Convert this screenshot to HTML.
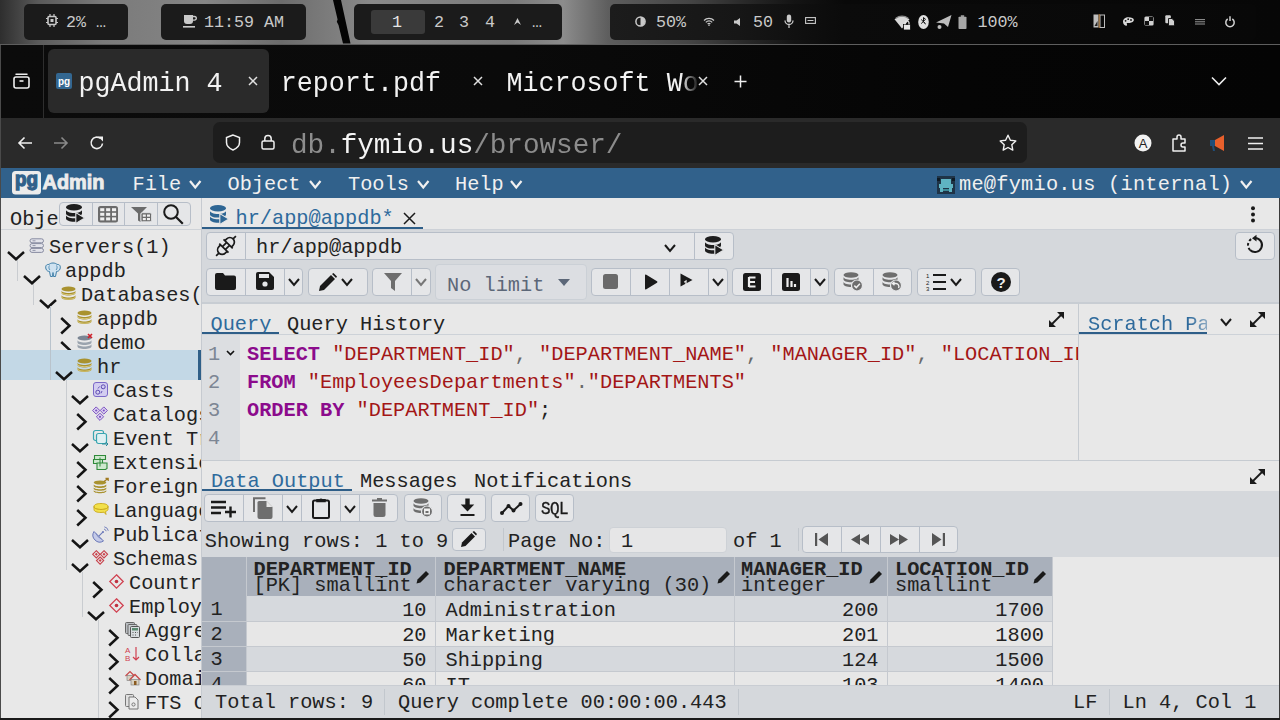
<!DOCTYPE html><html><head><meta charset="utf-8"><style>html,body{margin:0;padding:0;width:1280px;height:720px;overflow:hidden;background:#e8e8e8;position:relative}.t{position:absolute;white-space:pre;font-family:"Liberation Mono",monospace;line-height:1}svg{overflow:visible}</style></head><body><div style="position:absolute;left:0px;top:0px;width:1280px;height:44px;background:linear-gradient(90deg,#2e2e2e 0%,#5a5a5a 3%,#7a7a7a 8%,#858585 16%,#6c6c6c 22%,#8a8a8a 29%,#7a7a7a 40%,#8c8c8c 44%,#5e5e5e 47.5%,#444 54%,#2a2a2a 58%,#141414 62%,#090909 66%,#070707 100%)"></div>
<svg style="position:absolute;left:326px;top:0px;" width="30" height="44" viewBox="0 0 30 44"><path d="M7 0L15 0L24.5 43.5L17 43.5L12.5 25L10.8 21.8L11.6 19.5Z" fill="#040404"/></svg>
<div style="position:absolute;left:24px;top:4px;width:104px;height:36px;background:#1b1b1b;border-radius:5px"></div>
<div style="position:absolute;left:161px;top:4px;width:145px;height:36px;background:#1b1b1b;border-radius:5px"></div>
<div style="position:absolute;left:354px;top:4px;width:208px;height:36px;background:#1b1b1b;border-radius:5px"></div>
<div style="position:absolute;left:610px;top:4px;width:646px;height:36px;background:linear-gradient(90deg,#1c1c1c 0%,#161616 20%,#0b0b0b 36%,#080808 100%);border-radius:5px"></div>
<div style="position:absolute;left:371px;top:10px;width:54px;height:24px;background:#3a3a3a;border-radius:3px"></div>
<svg style="position:absolute;left:46px;top:14px;" width="12" height="13" viewBox="0 0 12 13"><rect x="2" y="2.5" width="8" height="8" rx="1" fill="none" stroke="#c9c9c9" stroke-width="1.6"/><rect x="4.5" y="5" width="3" height="3" fill="#c9c9c9"/><path d="M4 0v2M8 0v2M4 11v2M8 11v2M0 4.5h2M0 8.5h2M10 4.5h2M10 8.5h2" stroke="#c9c9c9" stroke-width="1.2"/></svg>
<div class="t" style="left:66px;top:14.70px;font-size:16.7px;color:#c9c9c9;letter-spacing:0px;font-weight:normal;">2% …</div>
<svg style="position:absolute;left:183px;top:14px;" width="14" height="14" viewBox="0 0 14 14"><path d="M1 1h9v6a3 3 0 0 1-3 3H4a3 3 0 0 1-3-3z" fill="#c9c9c9"/><path d="M10 2.5h1.5a1.8 1.8 0 0 1 0 3.6H10" fill="none" stroke="#c9c9c9" stroke-width="1.4"/><rect x="0" y="12" width="12" height="1.6" fill="#c9c9c9"/></svg>
<div class="t" style="left:204px;top:14.70px;font-size:16.7px;color:#c9c9c9;letter-spacing:0px;font-weight:normal;">11:59 AM</div>
<div class="t" style="left:392px;top:14.70px;font-size:16.7px;color:#e6e6e6;letter-spacing:0px;font-weight:normal;">1</div>
<div class="t" style="left:434px;top:14.70px;font-size:16.7px;color:#c9c9c9;letter-spacing:0px;font-weight:normal;">2</div>
<div class="t" style="left:459px;top:14.70px;font-size:16.7px;color:#c9c9c9;letter-spacing:0px;font-weight:normal;">3</div>
<div class="t" style="left:485px;top:14.70px;font-size:16.7px;color:#c9c9c9;letter-spacing:0px;font-weight:normal;">4</div>
<svg style="position:absolute;left:513px;top:17px;" width="9" height="9" viewBox="0 0 9 9"><path d="M1 8 L4.5 1 L8 8 L4.5 5.5Z" fill="#c9c9c9"/></svg>
<div class="t" style="left:532px;top:14.70px;font-size:16.7px;color:#c9c9c9;letter-spacing:0px;font-weight:normal;">…</div>
<svg style="position:absolute;left:635px;top:16px;" width="11" height="11" viewBox="0 0 11 11"><circle cx="5.5" cy="5.5" r="4.6" fill="none" stroke="#c9c9c9" stroke-width="1.5"/><path d="M5.5 1a4.5 4.5 0 0 1 0 9z" fill="#c9c9c9"/></svg>
<div class="t" style="left:656px;top:14.70px;font-size:16.7px;color:#c9c9c9;letter-spacing:0px;font-weight:normal;">50%</div>
<svg style="position:absolute;left:703px;top:17px;" width="12" height="9" viewBox="0 0 12 9"><path d="M1 3.5a7 7 0 0 1 10 0M2.8 5.3a4.5 4.5 0 0 1 6.4 0M4.6 7a2 2 0 0 1 2.8 0" fill="none" stroke="#c9c9c9" stroke-width="1.2"/><circle cx="6" cy="8.3" r="0.8" fill="#c9c9c9"/></svg>
<svg style="position:absolute;left:734px;top:18px;" width="8" height="8" viewBox="0 0 8 8"><path d="M0 2.5h2.5L6 0v8L2.5 5.5H0z" fill="#c9c9c9"/></svg>
<div class="t" style="left:753px;top:14.70px;font-size:16.7px;color:#c9c9c9;letter-spacing:0px;font-weight:normal;">50</div>
<svg style="position:absolute;left:784px;top:14px;" width="10" height="15" viewBox="0 0 10 15"><rect x="2.8" y="0.5" width="4.4" height="8" rx="2.2" fill="#c9c9c9"/><path d="M1 6.5a4 4 0 0 0 8 0M5 10.5v3.5" fill="none" stroke="#c9c9c9" stroke-width="1.3"/></svg>
<svg style="position:absolute;left:805px;top:17px;" width="11" height="7" viewBox="0 0 11 7"><rect x="0.6" y="0.6" width="9.8" height="5.8" fill="none" stroke="#c9c9c9" stroke-width="1.1"/><path d="M2.5 3.5h6" stroke="#c9c9c9" stroke-width="1"/></svg>
<svg style="position:absolute;left:894px;top:15px;" width="17" height="15" viewBox="0 0 17 15"><path d="M0.5 4.2 A11 11 0 0 1 15.5 4.2 L8 13.5Z" fill="#d8d8d8"/><path d="M1.8 3.2 A10 10 0 0 1 14.2 3.2" stroke="#8a8a8a" stroke-width="1.2" fill="none"/><rect x="9.5" y="9.5" width="7" height="5.5" fill="#e8e8e8" stroke="#0a0a0a" stroke-width="0.8"/><path d="M11 9.5V8a2 2 0 0 1 4 0v1.5" fill="none" stroke="#e8e8e8" stroke-width="1.2"/></svg>
<svg style="position:absolute;left:918px;top:15px;" width="11" height="14" viewBox="0 0 11 14"><ellipse cx="5.5" cy="7" rx="5.3" ry="7" fill="#e0e0e0"/><path d="M3.2 4.5l4.3 4.3-2-1.8V2.5l2 1.8-4.3 4.3" fill="none" stroke="#111" stroke-width="1"/></svg>
<svg style="position:absolute;left:936px;top:15px;" width="16" height="14" viewBox="0 0 16 14"><path d="M0 7.5 L15.5 0 L12 12 L8 8.5Z" fill="#bdbdbd"/><circle cx="3.5" cy="12" r="2" fill="#bdbdbd"/></svg>
<svg style="position:absolute;left:958px;top:15px;" width="9" height="14" viewBox="0 0 9 14"><rect x="0.5" y="1.8" width="8" height="12.2" rx="0.8" fill="#a8a8a8"/><rect x="2.8" y="0.3" width="3.4" height="1.6" fill="#a8a8a8"/></svg>
<div class="t" style="left:977.5px;top:14.70px;font-size:16.7px;color:#c9c9c9;letter-spacing:0px;font-weight:normal;">100%</div>
<svg style="position:absolute;left:1093px;top:14px;" width="12" height="14" viewBox="0 0 12 14"><rect x="0.5" y="0.5" width="5" height="13" fill="#bdbdbd"/><path d="M1.5 12 L4.5 7 L4.5 12Z" fill="#222"/><rect x="7" y="1" width="4.5" height="12.5" fill="none" stroke="#bdbdbd" stroke-width="1"/><path d="M6.2 0v14" stroke="#c88a40" stroke-width="0.9"/></svg>
<svg style="position:absolute;left:1123px;top:17px;" width="11" height="9" viewBox="0 0 11 9"><path d="M5.5 0.3C2.2 0.3 0 2.3 0 4.7s2 4 3.3 4c1 0 1-1 .4-1.6-.4-.5.2-1.2 1-1.2h2c2.3 0 4.2-1.2 4.2-2.8C10.9 1.3 8.5 0.3 5.5 0.3z" fill="#d8d8d8"/><circle cx="2.6" cy="3.8" r="0.9" fill="#111"/><circle cx="5.2" cy="2.2" r="0.9" fill="#111"/><circle cx="8" cy="3" r="0.9" fill="#111"/></svg>
<svg style="position:absolute;left:1144px;top:16px;" width="10" height="10" viewBox="0 0 10 10"><rect x="0.4" y="0.4" width="9.2" height="9.2" rx="1.5" fill="#d0d0d0"/><rect x="1" y="5" width="4" height="4" fill="#111"/><rect x="5" y="1" width="4" height="4" fill="#111"/></svg>
<svg style="position:absolute;left:1165px;top:15px;" width="10" height="11" viewBox="0 0 10 11"><rect x="0.3" y="0.3" width="5.5" height="8" rx="1" fill="#d0d0d0"/><path d="M3.5 3.5h3.5l2.5 2.5v4.8h-6z" fill="#d0d0d0" stroke="#0a0a0a" stroke-width="0.9"/></svg>
<svg style="position:absolute;left:1195px;top:19px;" width="10" height="6" viewBox="0 0 10 6"><path d="M0 0.6h10M0 2.8h10M0 5h10" stroke="#a8a8a8" stroke-width="0.9"/></svg>
<svg style="position:absolute;left:1225px;top:16px;" width="10" height="11" viewBox="0 0 10 11"><path d="M2.7 3a4.2 4.2 0 1 0 4.6 0" fill="none" stroke="#d0d0d0" stroke-width="1.5"/><path d="M5 0.3v4.6" stroke="#d0d0d0" stroke-width="1.5"/></svg>
<div style="position:absolute;left:0px;top:44px;width:1280px;height:1px;background:#5e5e5e"></div>
<div style="position:absolute;left:0px;top:45px;width:1280px;height:73px;background:linear-gradient(90deg,#0b0b0b 0%,#0a0a0a 40%,#050505 75%,#040404 100%)"></div>
<div style="position:absolute;left:0px;top:45px;width:1px;height:675px;background:#4a4a4a"></div>
<div style="position:absolute;left:43px;top:45px;width:1px;height:73px;background:#2e2e2e"></div>
<svg style="position:absolute;left:13px;top:73px;" width="17" height="16" viewBox="0 0 17 16"><path d="M3 1.2h11" stroke="#eee" stroke-width="1.5" fill="none" stroke-linecap="round"/><rect x="1" y="4" width="15" height="11" rx="2" fill="none" stroke="#eee" stroke-width="1.6"/><path d="M6.5 8h4" stroke="#eee" stroke-width="1.6"/></svg>
<div style="position:absolute;left:48px;top:49px;width:221px;height:64px;background:#2a2a2a;border-radius:6px"></div>
<svg style="position:absolute;left:56px;top:73px;" width="16" height="16" viewBox="0 0 16 16"><rect width="16" height="16" rx="2" fill="#336791"/><text x="8" y="12" font-family="Liberation Sans" font-weight="bold" font-size="10" fill="#fff" text-anchor="middle">pg</text></svg>
<div class="t" style="left:78.5px;top:70.73px;font-size:26.7px;color:#f2f2f2;letter-spacing:0px;font-weight:normal;transform:scaleY(1.02);transform-origin:0 90%">pgAdmin 4</div>
<svg style="position:absolute;left:248px;top:76px;" width="10" height="10" viewBox="0 0 10 10"><path d="M1 1L9 9M9 1L1 9" stroke="#e0e0e0" stroke-width="1.5"/></svg>
<div class="t" style="left:280.8px;top:70.73px;font-size:26.7px;color:#f2f2f2;letter-spacing:0px;font-weight:normal;transform:scaleY(1.02);transform-origin:0 90%">report.pdf</div>
<svg style="position:absolute;left:473px;top:76px;" width="10" height="10" viewBox="0 0 10 10"><path d="M1 1L9 9M9 1L1 9" stroke="#e0e0e0" stroke-width="1.5"/></svg>
<div class="t" style="left:506.5px;top:70.73px;font-size:26.7px;color:#f2f2f2;transform:scaleY(1.02);transform-origin:0 90%;width:190px;overflow:hidden;-webkit-mask-image:linear-gradient(90deg,#000 0,#000 174px,transparent 192px)">Microsoft Word</div>
<svg style="position:absolute;left:698px;top:76px;" width="10" height="10" viewBox="0 0 10 10"><path d="M1 1L9 9M9 1L1 9" stroke="#e0e0e0" stroke-width="1.5"/></svg>
<svg style="position:absolute;left:734px;top:75px;" width="13" height="13" viewBox="0 0 13 13"><path d="M6.5 0.5v12M0.5 6.5h12" stroke="#eee" stroke-width="1.5"/></svg>
<svg style="position:absolute;left:1211px;top:76px;" width="16" height="10" viewBox="0 0 16 10"><path d="M1 1.5l7 7 7-7" stroke="#eee" stroke-width="1.6" fill="none"/></svg>
<div style="position:absolute;left:1px;top:118px;width:1279px;height:50px;background:#2a2a2a"></div>
<svg style="position:absolute;left:17px;top:136px;" width="16" height="14" viewBox="0 0 16 14"><path d="M15 7H2M7.5 1.5L2 7l5.5 5.5" stroke="#f0f0f0" stroke-width="1.6" fill="none"/></svg>
<svg style="position:absolute;left:53px;top:136px;" width="16" height="14" viewBox="0 0 16 14"><path d="M1 7h13M8.5 1.5L14 7l-5.5 5.5" stroke="#8a8a8a" stroke-width="1.6" fill="none"/></svg>
<svg style="position:absolute;left:89px;top:135px;" width="16" height="16" viewBox="0 0 16 16"><path d="M13.5 8.5a5.7 5.7 0 1 1-2-5" stroke="#f0f0f0" stroke-width="1.6" fill="none"/><path d="M9 1.5h5v5z" fill="#f0f0f0"/></svg>
<div style="position:absolute;left:213px;top:122px;width:814px;height:41px;background:#1d1d1d;border-radius:7px"></div>
<svg style="position:absolute;left:225px;top:134px;" width="16" height="17" viewBox="0 0 16 17"><path d="M8 1L1.5 3.5v5C1.5 12 4.5 14.5 8 16c3.5-1.5 6.5-4 6.5-7.5v-5z" stroke="#f0f0f0" stroke-width="1.5" fill="none"/></svg>
<svg style="position:absolute;left:261px;top:134px;" width="14" height="16" viewBox="0 0 14 16"><rect x="1" y="7" width="12" height="8" rx="1.5" stroke="#f0f0f0" stroke-width="1.5" fill="none"/><path d="M3.8 7V4.8a3.2 3.2 0 0 1 6.4 0V7" stroke="#f0f0f0" stroke-width="1.5" fill="none"/></svg>
<div class="t" style="left:291px;top:132.37px;font-size:27.7px;letter-spacing:-0.05px;transform:scaleY(1.02);transform-origin:0 90%"><span style="color:#8c8c8c">db.</span><span style="color:#f4f4f4">fymio.us</span><span style="color:#8c8c8c">/browser/</span></div>
<svg style="position:absolute;left:999px;top:134px;" width="18" height="18" viewBox="0 0 18 18"><path d="M9 1.2l2.4 5 5.4.7-4 3.8 1 5.4L9 13.5l-4.8 2.6 1-5.4-4-3.8 5.4-.7z" stroke="#f0f0f0" stroke-width="1.4" fill="none" stroke-linejoin="round"/></svg>
<svg style="position:absolute;left:1134px;top:134px;" width="18" height="18" viewBox="0 0 18 18"><circle cx="9" cy="9" r="8.5" fill="#f2f2f2"/><text x="9" y="14" font-family="Liberation Sans" font-size="13" fill="#222" text-anchor="middle">A</text></svg>
<svg style="position:absolute;left:1171px;top:134px;" width="17" height="18" viewBox="0 0 17 18"><path d="M2 5h4V3a2 2 0 0 1 4 0v2h4v4h-2a2 2 0 0 0 0 4h2v4H2z" stroke="#f0f0f0" stroke-width="1.5" fill="none" stroke-linejoin="round"/></svg>
<svg style="position:absolute;left:1208px;top:134px;" width="18" height="18" viewBox="0 0 18 18"><path d="M2 6h5l9-5v16l-9-5H2z" fill="#e8602c"/><path d="M2 6h5v6H2z" fill="#1f4e79"/><path d="M4 12l1 5h2l-1-5z" fill="#1f4e79"/></svg>
<svg style="position:absolute;left:1248px;top:137px;" width="15" height="13" viewBox="0 0 15 13"><path d="M0 1h15M0 6.5h15M0 12h15" stroke="#f0f0f0" stroke-width="1.6"/></svg>
<div style="position:absolute;left:1px;top:168px;width:1279px;height:30px;background:#31618b"></div>
<svg style="position:absolute;left:11px;top:171px;" width="96" height="24" viewBox="0 0 96 24"><rect x="1" y="0" width="29" height="23.5" rx="3.5" fill="#ececec"/><text x="4" y="15.2" font-family="Liberation Sans" font-weight="bold" font-size="20" fill="#31618b" stroke="#31618b" stroke-width="1.3" textLength="23" lengthAdjust="spacingAndGlyphs">pg</text><text x="31.5" y="18.4" font-family="Liberation Sans" font-weight="bold" font-size="20.4" fill="#ececec" stroke="#ececec" stroke-width="0.9" textLength="62" lengthAdjust="spacingAndGlyphs">Admin</text></svg>
<div class="t" style="left:132.5px;top:174.54px;font-size:20.3px;color:#f0f0f0;letter-spacing:0px;font-weight:normal;">File</div>
<svg style="position:absolute;left:188.5px;top:180px;" width="12.5" height="8.5" viewBox="0 0 12.5 8.5"><path d="M1 1L6.25 7.5L11.5 1" stroke="#f0f0f0" stroke-width="2.2" fill="none"/></svg>
<div class="t" style="left:227.5px;top:174.54px;font-size:20.3px;color:#f0f0f0;letter-spacing:0px;font-weight:normal;">Object</div>
<svg style="position:absolute;left:308.5px;top:180px;" width="12.5" height="8.5" viewBox="0 0 12.5 8.5"><path d="M1 1L6.25 7.5L11.5 1" stroke="#f0f0f0" stroke-width="2.2" fill="none"/></svg>
<div class="t" style="left:348px;top:174.54px;font-size:20.3px;color:#f0f0f0;letter-spacing:0px;font-weight:normal;">Tools</div>
<svg style="position:absolute;left:416.5px;top:180px;" width="12.5" height="8.5" viewBox="0 0 12.5 8.5"><path d="M1 1L6.25 7.5L11.5 1" stroke="#f0f0f0" stroke-width="2.2" fill="none"/></svg>
<div class="t" style="left:455px;top:174.54px;font-size:20.3px;color:#f0f0f0;letter-spacing:0px;font-weight:normal;">Help</div>
<svg style="position:absolute;left:510px;top:180px;" width="12.5" height="8.5" viewBox="0 0 12.5 8.5"><path d="M1 1L6.25 7.5L11.5 1" stroke="#f0f0f0" stroke-width="2.2" fill="none"/></svg>
<svg style="position:absolute;left:937px;top:176px;" width="18" height="18" viewBox="0 0 18 18"><rect x="0" y="0" width="18" height="18" fill="#1f3447"/><rect x="0" y="2" width="3" height="3" fill="#0e1a24"/><rect x="15" y="2" width="3" height="3" fill="#0e1a24"/><rect x="4" y="3" width="10" height="6" fill="#5fb3c2"/><rect x="2" y="8" width="14" height="4" fill="#5fb3c2"/><rect x="3" y="12" width="3" height="4" fill="#5fb3c2"/><rect x="12" y="12" width="3" height="4" fill="#5fb3c2"/><rect x="6" y="13" width="6" height="2" fill="#3d8a98"/></svg>
<div class="t" style="left:959px;top:174.54px;font-size:20.3px;color:#f0f0f0;letter-spacing:0.25px;font-weight:normal;">me@fymio.us (internal)</div>
<svg style="position:absolute;left:1240px;top:180px;" width="12.5" height="8.5" viewBox="0 0 12.5 8.5"><path d="M1 1L6.25 7.5L11.5 1" stroke="#f0f0f0" stroke-width="2.2" fill="none"/></svg>
<div style="position:absolute;left:1px;top:198px;width:201px;height:520px;background:#e8e8e8"></div>
<div class="t" style="left:10px;top:209.94px;font-size:20.3px;color:#222222;letter-spacing:0px;font-weight:normal;">Obje</div>
<div style="position:absolute;left:58.5px;top:202px;width:132px;height:24px;background:#e5e6e8;border:1px solid #b7bec8;border-radius:4px;box-sizing:border-box"></div>
<div style="position:absolute;left:91.5px;top:203px;width:1px;height:22px;background:#b7bec8"></div>
<div style="position:absolute;left:124.2px;top:203px;width:1px;height:22px;background:#b7bec8"></div>
<div style="position:absolute;left:157px;top:203px;width:1px;height:22px;background:#b7bec8"></div>
<svg style="position:absolute;left:66px;top:204px;" width="19" height="20" viewBox="0 0 19 20"><ellipse cx="8" cy="3.2" rx="8" ry="3.2" fill="#1e1e1e"/><path d="M0 5.8v3.6c0 1.8 3.6 3.2 8 3.2s8-1.4 8-3.2V5.8c0 1.8-3.6 3.2-8 3.2S0 7.6 0 5.8zM0 11v3.6c0 1.8 3.6 3.2 8 3.2s8-1.4 8-3.2V11c0 1.8-3.6 3.2-8 3.2S0 12.8 0 11z" fill="#1e1e1e"/><path d="M9.8 8.6L18.8 14L9.8 19.4Z" fill="#1e1e1e" stroke="#e5e6e8" stroke-width="1.1"/></svg>
<svg style="position:absolute;left:98px;top:206px;" width="20" height="16.5" viewBox="0 0 20 16.5"><rect x="0" y="0" width="20" height="16.5" rx="2.5" fill="#6b6b6b"/><rect x="2.2" y="2.2" width="4.1" height="3" fill="#f0f0f0"/><rect x="8.1" y="2.2" width="4.1" height="3" fill="#f0f0f0"/><rect x="14.0" y="2.2" width="4.1" height="3" fill="#f0f0f0"/><rect x="2.2" y="6.8" width="4.1" height="3" fill="#f0f0f0"/><rect x="8.1" y="6.8" width="4.1" height="3" fill="#f0f0f0"/><rect x="14.0" y="6.8" width="4.1" height="3" fill="#f0f0f0"/><rect x="2.2" y="11.4" width="4.1" height="3" fill="#f0f0f0"/><rect x="8.1" y="11.4" width="4.1" height="3" fill="#f0f0f0"/><rect x="14.0" y="11.4" width="4.1" height="3" fill="#f0f0f0"/></svg>
<svg style="position:absolute;left:131px;top:206.5px;" width="21" height="15" viewBox="0 0 21 15"><path d="M0 0h16l-6.5 6.5v8.5l-2.5-1.5V6.5z" fill="#6b6b6b"/><rect x="10" y="5.7" width="10.5" height="9" rx="1.5" fill="#6b6b6b" stroke="#e5e6e8" stroke-width="0.8"/><rect x="11.8" y="7.5" width="3" height="2.2" fill="#f0f0f0"/><rect x="16" y="7.5" width="3" height="2.2" fill="#f0f0f0"/><rect x="11.8" y="11" width="3" height="2.2" fill="#f0f0f0"/><rect x="16" y="11" width="3" height="2.2" fill="#f0f0f0"/></svg>
<svg style="position:absolute;left:163px;top:204px;" width="21" height="20" viewBox="0 0 21 20"><circle cx="8" cy="8" r="6.8" stroke="#1a1a1a" stroke-width="2" fill="none"/><path d="M12.8 12.8l7 7" stroke="#1a1a1a" stroke-width="2.2"/></svg>
<div style="position:absolute;left:1px;top:229px;width:201px;height:1px;background:#cfd3d8"></div>
<div style="position:absolute;left:17px;top:258px;width:1px;height:23px;background:#c9ccd0"></div>
<div style="position:absolute;left:33px;top:282px;width:1px;height:23px;background:#c9ccd0"></div>
<div style="position:absolute;left:65.5px;top:380px;width:1px;height:190px;background:#c9ccd0"></div>
<div style="position:absolute;left:81.5px;top:572px;width:1px;height:45px;background:#c9ccd0"></div>
<div style="position:absolute;left:97.5px;top:620px;width:1px;height:98px;background:#c9ccd0"></div>
<div class="t" style="left:49px;top:237.74px;font-size:20.3px;color:#222222;letter-spacing:0px;font-weight:normal;">Servers(1)</div>
<svg style="position:absolute;left:6.799999999999997px;top:250.79999999999998px;" width="18" height="9" viewBox="0 0 18 9"><path d="M1 1L9 8.2L17 1" stroke="#141414" stroke-width="2.5" fill="none"/></svg>
<svg style="position:absolute;left:29px;top:238.1px;" width="16" height="16" viewBox="0 0 16 16"><rect x="1" y="0.8" width="13.5" height="4" rx="2" fill="#e2e3ea" stroke="#7d8199" stroke-width="0.9"/><rect x="1" y="5.6" width="13.5" height="4" rx="2" fill="#e2e3ea" stroke="#7d8199" stroke-width="0.9"/><rect x="1" y="10.4" width="13.5" height="4" rx="2" fill="#e2e3ea" stroke="#7d8199" stroke-width="0.9"/><path d="M3.5 2.8h3M3.5 7.6h3M3.5 12.4h3" stroke="#7d8199" stroke-width="0.8"/></svg>
<div class="t" style="left:65px;top:261.74px;font-size:20.3px;color:#222222;letter-spacing:0px;font-weight:normal;">appdb</div>
<svg style="position:absolute;left:22.799999999999997px;top:274.8px;" width="18" height="9" viewBox="0 0 18 9"><path d="M1 1L9 8.2L17 1" stroke="#141414" stroke-width="2.5" fill="none"/></svg>
<svg style="position:absolute;left:45px;top:262.1px;" width="16" height="16" viewBox="0 0 16 16"><path d="M4 2.5C5.5 0.5 10.5 0.5 12 2.5C14.5 2 16 4 15 7C14.3 9 12.5 9.5 11.5 9.5L10.5 14.5H8.5L8 10.5L7.5 14.5H5.5L4.5 9.5C3.5 9.5 1.7 9 1 7C0 4 1.5 2 4 2.5z" fill="#cfe2f0" stroke="#3f7fa8" stroke-width="1"/><path d="M4.5 3.5C3.5 5 3.8 7 5 8M11.5 3.5C12.5 5 12.2 7 11 8" stroke="#3f7fa8" stroke-width="0.8" fill="none"/></svg>
<div class="t" style="left:81px;top:285.74px;font-size:20.3px;color:#222222;letter-spacing:0px;font-weight:normal;">Databases(</div>
<svg style="position:absolute;left:38.8px;top:298.8px;" width="18" height="9" viewBox="0 0 18 9"><path d="M1 1L9 8.2L17 1" stroke="#141414" stroke-width="2.5" fill="none"/></svg>
<svg style="position:absolute;left:61px;top:286.1px;" width="16" height="16" viewBox="0 0 16 16"><ellipse cx="7.5" cy="3" rx="7" ry="2.5" fill="#a9922f"/><path d="M0.5 4.5v2.5c0 1.4 3.1 2.5 7 2.5s7-1.1 7-2.5V4.5c0 1.4-3.1 2.5-7 2.5s-7-1.1-7-2.5zM0.5 9v2.5c0 1.4 3.1 2.5 7 2.5s7-1.1 7-2.5V9c0 1.4-3.1 2.5-7 2.5s-7-1.1-7-2.5z" fill="#a9922f"/><path d="M0.5 6.2c0 1.4 3.1 2.5 7 2.5s7-1.1 7-2.5M0.5 10.7c0 1.4 3.1 2.5 7 2.5s7-1.1 7-2.5" stroke="#e8dc9a" stroke-width="0.8" fill="none"/></svg>
<div class="t" style="left:97px;top:309.74px;font-size:20.3px;color:#222222;letter-spacing:0px;font-weight:normal;">appdb</div>
<svg style="position:absolute;left:59.5px;top:317.3px;" width="11" height="17.5" viewBox="0 0 11 17.5"><path d="M1.2 1L9.5 8.75L1.2 16.5" stroke="#141414" stroke-width="2.5" fill="none"/></svg>
<svg style="position:absolute;left:77px;top:310.1px;" width="16" height="16" viewBox="0 0 16 16"><ellipse cx="7.5" cy="3" rx="7" ry="2.5" fill="#a9922f"/><path d="M0.5 4.5v2.5c0 1.4 3.1 2.5 7 2.5s7-1.1 7-2.5V4.5c0 1.4-3.1 2.5-7 2.5s-7-1.1-7-2.5zM0.5 9v2.5c0 1.4 3.1 2.5 7 2.5s7-1.1 7-2.5V9c0 1.4-3.1 2.5-7 2.5s-7-1.1-7-2.5z" fill="#a9922f"/><path d="M0.5 6.2c0 1.4 3.1 2.5 7 2.5s7-1.1 7-2.5M0.5 10.7c0 1.4 3.1 2.5 7 2.5s7-1.1 7-2.5" stroke="#e8dc9a" stroke-width="0.8" fill="none"/></svg>
<div class="t" style="left:97px;top:333.74px;font-size:20.3px;color:#222222;letter-spacing:0px;font-weight:normal;">demo</div>
<svg style="position:absolute;left:59.5px;top:341.3px;" width="11" height="17.5" viewBox="0 0 11 17.5"><path d="M1.2 1L9.5 8.75L1.2 16.5" stroke="#141414" stroke-width="2.5" fill="none"/></svg>
<svg style="position:absolute;left:77px;top:334.1px;" width="16" height="16" viewBox="0 0 16 16"><ellipse cx="7.5" cy="4" rx="7" ry="2.5" fill="#7b8694"/><path d="M0.5 6v2.5c0 1.4 3.1 2.5 7 2.5s7-1.1 7-2.5V6c0 1.4-3.1 2.5-7 2.5s-7-1.1-7-2.5zM0.5 10v2.5c0 1.4 3.1 2.5 7 2.5s7-1.1 7-2.5V10c0 1.4-3.1 2.5-7 2.5s-7-1.1-7-2.5z" fill="#9aa3ad"/><path d="M11 0l4 4M15 0l-4 4" stroke="#d0202a" stroke-width="1.6"/></svg>
<div style="position:absolute;left:1px;top:350px;width:197px;height:30px;background:#c3d8e6"></div>
<div style="position:absolute;left:198px;top:350px;width:3px;height:30px;background:#2f5f88"></div>
<div style="position:absolute;left:49.5px;top:306px;width:1px;height:74px;background:#b9c3cc"></div>
<div class="t" style="left:97px;top:357.74px;font-size:20.3px;color:#222222;letter-spacing:0px;font-weight:normal;">hr</div>
<svg style="position:absolute;left:54.8px;top:370.8px;" width="18" height="9" viewBox="0 0 18 9"><path d="M1 1L9 8.2L17 1" stroke="#141414" stroke-width="2.5" fill="none"/></svg>
<svg style="position:absolute;left:77px;top:358.1px;" width="16" height="16" viewBox="0 0 16 16"><ellipse cx="7.5" cy="3" rx="7" ry="2.5" fill="#a9922f"/><path d="M0.5 4.5v2.5c0 1.4 3.1 2.5 7 2.5s7-1.1 7-2.5V4.5c0 1.4-3.1 2.5-7 2.5s-7-1.1-7-2.5zM0.5 9v2.5c0 1.4 3.1 2.5 7 2.5s7-1.1 7-2.5V9c0 1.4-3.1 2.5-7 2.5s-7-1.1-7-2.5z" fill="#a9922f"/><path d="M0.5 6.2c0 1.4 3.1 2.5 7 2.5s7-1.1 7-2.5M0.5 10.7c0 1.4 3.1 2.5 7 2.5s7-1.1 7-2.5" stroke="#e8dc9a" stroke-width="0.8" fill="none"/></svg>
<div class="t" style="left:113px;top:381.74px;font-size:20.3px;color:#222222;letter-spacing:0px;font-weight:normal;">Casts</div>
<svg style="position:absolute;left:70.8px;top:394.8px;" width="18" height="9" viewBox="0 0 18 9"><path d="M1 1L9 8.2L17 1" stroke="#141414" stroke-width="2.5" fill="none"/></svg>
<svg style="position:absolute;left:93px;top:382.1px;" width="16" height="16" viewBox="0 0 16 16"><rect x="0.5" y="0.5" width="14" height="14" rx="2.5" fill="#d3cdf0" stroke="#7b68c8" stroke-width="1"/><circle cx="4.8" cy="10.2" r="2" fill="none" stroke="#5a48b0" stroke-width="1"/><circle cx="10.2" cy="4.8" r="2" fill="none" stroke="#5a48b0" stroke-width="1"/><path d="M5 6.5l1.5-2M9 9l-1 2.3" stroke="#5a48b0" stroke-width="0.9"/></svg>
<div class="t" style="left:113px;top:405.74px;font-size:20.3px;color:#222222;letter-spacing:0px;font-weight:normal;">Catalogs</div>
<svg style="position:absolute;left:75.5px;top:413.3px;" width="11" height="17.5" viewBox="0 0 11 17.5"><path d="M1.2 1L9.5 8.75L1.2 16.5" stroke="#141414" stroke-width="2.5" fill="none"/></svg>
<svg style="position:absolute;left:93px;top:406.1px;" width="16" height="16" viewBox="0 0 16 16"><path d="M3.2 0.8999999999999999L6.800000000000001 4.5L3.2 8.1L-0.3999999999999999 4.5Z" fill="#ddd3f2" stroke="#7a4fc0" stroke-width="1"/><circle cx="3.2" cy="4.5" r="1.1" fill="#7a4fc0"/><path d="M10.8 0.8999999999999999L14.4 4.5L10.8 8.1L7.200000000000001 4.5Z" fill="#ddd3f2" stroke="#7a4fc0" stroke-width="1"/><circle cx="10.8" cy="4.5" r="1.1" fill="#7a4fc0"/><path d="M7 7.200000000000001L10.6 10.8L7 14.4L3.4 10.8Z" fill="#ddd3f2" stroke="#7a4fc0" stroke-width="1"/><circle cx="7" cy="10.8" r="1.1" fill="#7a4fc0"/></svg>
<div class="t" style="left:113px;top:429.74px;font-size:20.3px;color:#222222;letter-spacing:0px;font-weight:normal;">Event Tr</div>
<svg style="position:absolute;left:70.8px;top:442.8px;" width="18" height="9" viewBox="0 0 18 9"><path d="M1 1L9 8.2L17 1" stroke="#141414" stroke-width="2.5" fill="none"/></svg>
<svg style="position:absolute;left:93px;top:430.1px;" width="16" height="16" viewBox="0 0 16 16"><rect x="0.5" y="0.5" width="10" height="10" rx="2" fill="none" stroke="#3aa5b0" stroke-width="1.2"/><rect x="3.5" y="3.5" width="10" height="10" rx="2" fill="#dff0f2" stroke="#3aa5b0" stroke-width="1.2"/><path d="M9 14h6M13 12l2 2-2 2" stroke="#2a8a9a" stroke-width="1" fill="none"/></svg>
<div class="t" style="left:113px;top:453.74px;font-size:20.3px;color:#222222;letter-spacing:0px;font-weight:normal;">Extensio</div>
<svg style="position:absolute;left:75.5px;top:461.3px;" width="11" height="17.5" viewBox="0 0 11 17.5"><path d="M1.2 1L9.5 8.75L1.2 16.5" stroke="#141414" stroke-width="2.5" fill="none"/></svg>
<svg style="position:absolute;left:93px;top:454.1px;" width="16" height="16" viewBox="0 0 16 16"><path d="M1.5 1.5h11v4h-11z" fill="#cfe8cf" stroke="#2f8a3a" stroke-width="1.1"/><path d="M0.5 5.5h9v4h-9z" fill="#cfe8cf" stroke="#2f8a3a" stroke-width="1.1"/><path d="M4 9h10v5.5l-1.5 1h-8.5z" fill="#cfe8cf" stroke="#2f8a3a" stroke-width="1.1"/><path d="M7 3.5v9" stroke="#2f8a3a" stroke-width="1"/></svg>
<div class="t" style="left:113px;top:477.74px;font-size:20.3px;color:#222222;letter-spacing:0px;font-weight:normal;">Foreign </div>
<svg style="position:absolute;left:75.5px;top:485.3px;" width="11" height="17.5" viewBox="0 0 11 17.5"><path d="M1.2 1L9.5 8.75L1.2 16.5" stroke="#141414" stroke-width="2.5" fill="none"/></svg>
<svg style="position:absolute;left:93px;top:478.1px;" width="16" height="16" viewBox="0 0 16 16"><ellipse cx="7" cy="4.5" rx="6.3" ry="2" fill="#a99230"/><path d="M0.7 6.3c0 1.1 2.8 2 6.3 2s6.3-.9 6.3-2v1.6c0 1.1-2.8 2-6.3 2S0.7 9 0.7 7.9zM0.7 9.2c0 1.1 2.8 2 6.3 2s6.3-.9 6.3-2v1.6c0 1.1-2.8 2-6.3 2S0.7 11.9 0.7 10.8zM0.7 12.1c0 1.1 2.8 2 6.3 2s6.3-.9 6.3-2v1.2c0 1.1-2.8 2-6.3 2S0.7 14.4 0.7 13.3z" fill="#a99230"/><path d="M11 3.5l4-3M12.5 0.3h2.7v2.7" stroke="#a07a20" stroke-width="1.2" fill="none"/></svg>
<div class="t" style="left:113px;top:501.74px;font-size:20.3px;color:#222222;letter-spacing:0px;font-weight:normal;">Language</div>
<svg style="position:absolute;left:75.5px;top:509.3px;" width="11" height="17.5" viewBox="0 0 11 17.5"><path d="M1.2 1L9.5 8.75L1.2 16.5" stroke="#141414" stroke-width="2.5" fill="none"/></svg>
<svg style="position:absolute;left:93px;top:502.1px;" width="16" height="16" viewBox="0 0 16 16"><path d="M1 4.5C1 2.5 4 1.5 8 1.5s7 1 7 3-3 3-7 3-7-1-7-3z" fill="#f2e04a" stroke="#c9a81a" stroke-width="0.9"/><path d="M1 4.5v3c0 2 3 3 7 3 1 0 2-.1 3-.3l2 2.3-.5-3c1.6-.5 2.5-1.2 2.5-2v-3c0 2-3 3-7 3s-7-1-7-3z" fill="#f2e04a" stroke="#c9a81a" stroke-width="0.9"/></svg>
<div class="t" style="left:113px;top:525.74px;font-size:20.3px;color:#222222;letter-spacing:0px;font-weight:normal;">Publicat</div>
<svg style="position:absolute;left:70.8px;top:538.8000000000001px;" width="18" height="9" viewBox="0 0 18 9"><path d="M1 1L9 8.2L17 1" stroke="#141414" stroke-width="2.5" fill="none"/></svg>
<svg style="position:absolute;left:93px;top:526.1px;" width="16" height="16" viewBox="0 0 16 16"><path d="M1 5.5A6.9 6.9 0 0 0 10.5 15Z" fill="#c5cbe8" stroke="#6a78b8" stroke-width="1"/><path d="M2.8 7.3Q4.5 11.5 8.7 13.2" stroke="#6a78b8" stroke-width="0.7" fill="none"/><path d="M5.8 10.2l4-4" stroke="#6a78b8" stroke-width="1.1"/><circle cx="10" cy="6" r="1" fill="#6a78b8"/><path d="M11 3a3 3 0 0 1 2.2 2.2M11.3 0.8a5 5 0 0 1 4 4" stroke="#6a78b8" stroke-width="0.9" fill="none"/></svg>
<div class="t" style="left:113px;top:549.74px;font-size:20.3px;color:#222222;letter-spacing:0px;font-weight:normal;">Schemas </div>
<svg style="position:absolute;left:70.8px;top:562.8000000000001px;" width="18" height="9" viewBox="0 0 18 9"><path d="M1 1L9 8.2L17 1" stroke="#141414" stroke-width="2.5" fill="none"/></svg>
<svg style="position:absolute;left:93px;top:550.1px;" width="16" height="16" viewBox="0 0 16 16"><path d="M3.3 0.6999999999999997L6.9 4.3L3.3 7.9L-0.30000000000000027 4.3Z" fill="none" stroke="#c8404a" stroke-width="1.1"/><path d="M3.3 2.8L4.8 4.3L3.3 5.8L1.7999999999999998 4.3Z" fill="#c8404a"/><path d="M11 0.6999999999999997L14.6 4.3L11 7.9L7.4 4.3Z" fill="none" stroke="#c8404a" stroke-width="1.1"/><path d="M11 2.8L12.5 4.3L11 5.8L9.5 4.3Z" fill="#c8404a"/><path d="M7.1 7.0L10.7 10.6L7.1 14.2L3.4999999999999996 10.6Z" fill="none" stroke="#c8404a" stroke-width="1.1"/><path d="M7.1 9.1L8.6 10.6L7.1 12.1L5.6 10.6Z" fill="#c8404a"/></svg>
<div class="t" style="left:129px;top:573.74px;font-size:20.3px;color:#222222;letter-spacing:0px;font-weight:normal;">Countr</div>
<svg style="position:absolute;left:91.5px;top:581.3000000000001px;" width="11" height="17.5" viewBox="0 0 11 17.5"><path d="M1.2 1L9.5 8.75L1.2 16.5" stroke="#141414" stroke-width="2.5" fill="none"/></svg>
<svg style="position:absolute;left:109px;top:574.1px;" width="16" height="16" viewBox="0 0 16 16"><path d="M7.5 0.8l6.7 6.7-6.7 6.7-6.7-6.7z" fill="none" stroke="#d04050" stroke-width="1.3"/><circle cx="7.5" cy="7.5" r="1.8" fill="#c03040"/></svg>
<div class="t" style="left:129px;top:597.74px;font-size:20.3px;color:#222222;letter-spacing:0px;font-weight:normal;">Employ</div>
<svg style="position:absolute;left:86.8px;top:610.8000000000001px;" width="18" height="9" viewBox="0 0 18 9"><path d="M1 1L9 8.2L17 1" stroke="#141414" stroke-width="2.5" fill="none"/></svg>
<svg style="position:absolute;left:109px;top:598.1px;" width="16" height="16" viewBox="0 0 16 16"><path d="M7.5 0.8l6.7 6.7-6.7 6.7-6.7-6.7z" fill="none" stroke="#d04050" stroke-width="1.3"/><circle cx="7.5" cy="7.5" r="1.8" fill="#c03040"/></svg>
<div class="t" style="left:145px;top:621.74px;font-size:20.3px;color:#222222;letter-spacing:0px;font-weight:normal;">Aggre</div>
<svg style="position:absolute;left:107.5px;top:629.3000000000001px;" width="11" height="17.5" viewBox="0 0 11 17.5"><path d="M1.2 1L9.5 8.75L1.2 16.5" stroke="#141414" stroke-width="2.5" fill="none"/></svg>
<svg style="position:absolute;left:125px;top:622.1px;" width="16" height="16" viewBox="0 0 16 16"><rect x="0.5" y="0.5" width="9" height="11" rx="1" fill="#b8bcc0" stroke="#666" stroke-width="1"/><rect x="3" y="2.5" width="9" height="11" rx="1" fill="#c8ccd0" stroke="#666" stroke-width="1"/><rect x="5.5" y="4.5" width="9" height="11" rx="1" fill="#d8dcdf" stroke="#555" stroke-width="1"/><rect x="7" y="6" width="6" height="2.5" fill="#5a8a70"/><path d="M7.5 10.5h1M10 10.5h1M12.5 10.5h.5M7.5 13h1M10 13h1" stroke="#555" stroke-width="1.2"/></svg>
<div class="t" style="left:145px;top:645.74px;font-size:20.3px;color:#222222;letter-spacing:0px;font-weight:normal;">Colla</div>
<svg style="position:absolute;left:107.5px;top:653.3000000000001px;" width="11" height="17.5" viewBox="0 0 11 17.5"><path d="M1.2 1L9.5 8.75L1.2 16.5" stroke="#141414" stroke-width="2.5" fill="none"/></svg>
<svg style="position:absolute;left:125px;top:646.1px;" width="16" height="16" viewBox="0 0 16 16"><text x="0" y="7" font-family="Liberation Sans" font-size="8" fill="#d04050">A</text><text x="0" y="15" font-family="Liberation Sans" font-size="8" fill="#d04050">B</text><path d="M11 1v13M8 11l3 3 3-3" stroke="#d04050" stroke-width="1.2" fill="none"/></svg>
<div class="t" style="left:145px;top:669.74px;font-size:20.3px;color:#222222;letter-spacing:0px;font-weight:normal;">Domai</div>
<svg style="position:absolute;left:107.5px;top:677.3000000000001px;" width="11" height="17.5" viewBox="0 0 11 17.5"><path d="M1.2 1L9.5 8.75L1.2 16.5" stroke="#141414" stroke-width="2.5" fill="none"/></svg>
<svg style="position:absolute;left:125px;top:670.1px;" width="16" height="16" viewBox="0 0 16 16"><path d="M0.5 6L5 1.5 9.5 6" stroke="#c84848" stroke-width="1.2" fill="none"/><rect x="2" y="5.5" width="6" height="5" fill="#d8d0c0" stroke="#777" stroke-width="0.6"/><path d="M4.5 10L10 4.5 15.5 10" stroke="#c84848" stroke-width="1.3" fill="#e6e6e6"/><rect x="6" y="9.5" width="8" height="5.5" fill="#d8d0c0" stroke="#777" stroke-width="0.6"/><rect x="9" y="11" width="2.5" height="4" fill="#8a5a20"/></svg>
<div class="t" style="left:145px;top:693.74px;font-size:20.3px;color:#222222;letter-spacing:0px;font-weight:normal;">FTS C</div>
<svg style="position:absolute;left:107.5px;top:701.3000000000001px;" width="11" height="17.5" viewBox="0 0 11 17.5"><path d="M1.2 1L9.5 8.75L1.2 16.5" stroke="#141414" stroke-width="2.5" fill="none"/></svg>
<svg style="position:absolute;left:125px;top:694.1px;" width="16" height="16" viewBox="0 0 16 16"><rect x="0.5" y="0.5" width="8" height="12" rx="1" fill="#e0e0e0" stroke="#777" stroke-width="1"/><path d="M4 3h6l3 3v9H4z" fill="#ececec" stroke="#777" stroke-width="1"/><circle cx="8.5" cy="10.5" r="1.6" fill="none" stroke="#777" stroke-width="1"/></svg>
<div style="position:absolute;left:201px;top:198px;width:1px;height:520px;background:#c6cad0"></div>
<div style="position:absolute;left:202px;top:198px;width:1078px;height:31px;background:#e8e8e8"></div>
<svg style="position:absolute;left:210px;top:205px;" width="19" height="20" viewBox="0 0 19 20"><ellipse cx="8" cy="3.2" rx="8" ry="3.2" fill="#2e6694"/><path d="M0 5.8v3.6c0 1.8 3.6 3.2 8 3.2s8-1.4 8-3.2V5.8c0 1.8-3.6 3.2-8 3.2S0 7.6 0 5.8zM0 11v3.6c0 1.8 3.6 3.2 8 3.2s8-1.4 8-3.2V11c0 1.8-3.6 3.2-8 3.2S0 12.8 0 11z" fill="#2e6694"/><path d="M9.8 8.6L18.8 14L9.8 19.4Z" fill="#2e6694" stroke="#e8e8e8" stroke-width="1.1"/></svg>
<div class="t" style="left:235.5px;top:209.44px;font-size:20.3px;color:#2e6a9c;letter-spacing:0px;font-weight:normal;">hr/app@appdb*</div>
<svg style="position:absolute;left:402.5px;top:211.5px;" width="13.0" height="13.0" viewBox="0 0 13.0 13.0"><path d="M1 1L12.0 12.0M12.0 1L1 12.0" stroke="#1a1a1a" stroke-width="1.5"/></svg>
<div style="position:absolute;left:202px;top:227px;width:221px;height:2px;background:#2e5e88"></div>
<svg style="position:absolute;left:1250px;top:205.5px;" width="6" height="17" viewBox="0 0 6 17"><circle cx="3" cy="2.3" r="2" fill="#1a1a1a"/><circle cx="3" cy="8.5" r="2" fill="#1a1a1a"/><circle cx="3" cy="14.6" r="2" fill="#1a1a1a"/></svg>
<div style="position:absolute;left:202px;top:229px;width:1078px;height:74px;background:#d5d8dc"></div>
<div style="position:absolute;left:202px;top:302px;width:1078px;height:2px;background:#c8cdd3"></div>
<div style="position:absolute;left:202px;top:229px;width:1078px;height:1px;background:#cdd1d7"></div>
<div style="position:absolute;left:206px;top:232px;width:528px;height:28px;background:#e5e6e8;border:1px solid #b7bec8;border-radius:4px;box-sizing:border-box"></div>
<div style="position:absolute;left:245px;top:233px;width:1px;height:26px;background:#b7bec8"></div>
<div style="position:absolute;left:694px;top:233px;width:1px;height:26px;background:#b7bec8"></div>
<svg style="position:absolute;left:214px;top:234px;" width="24" height="24" viewBox="0 0 24 24"><g transform="translate(12,12) rotate(-45)" stroke="#1a1a1a" stroke-width="1.7" fill="none"><path d="M-14 0H-10M10 0H14"/><path d="M-3 -4.5H-5.5A4.5 4.5 0 0 0 -5.5 4.5H-3M3 -4.5H5.5A4.5 4.5 0 0 1 5.5 4.5H3"/><path d="M-3 -6.5V6.5M3 -6.5V6.5M-3 -2H3M-3 2H3"/></g></svg>
<div class="t" style="left:256px;top:238.44px;font-size:20.3px;color:#222222;letter-spacing:0px;font-weight:normal;">hr/app@appdb</div>
<svg style="position:absolute;left:664px;top:244px;" width="12" height="8" viewBox="0 0 12 8"><path d="M1 1L6.0 7L11 1" stroke="#1a1a1a" stroke-width="2" fill="none"/></svg>
<svg style="position:absolute;left:705px;top:236px;" width="19" height="20" viewBox="0 0 19 20"><ellipse cx="8" cy="3.2" rx="8" ry="3.2" fill="#1e1e1e"/><path d="M0 5.8v3.6c0 1.8 3.6 3.2 8 3.2s8-1.4 8-3.2V5.8c0 1.8-3.6 3.2-8 3.2S0 7.6 0 5.8zM0 11v3.6c0 1.8 3.6 3.2 8 3.2s8-1.4 8-3.2V11c0 1.8-3.6 3.2-8 3.2S0 12.8 0 11z" fill="#1e1e1e"/><path d="M9.8 8.6L18.8 14L9.8 19.4Z" fill="#1e1e1e" stroke="#e5e6e8" stroke-width="1.1"/></svg>
<div style="position:absolute;left:1235px;top:232px;width:40px;height:28px;background:#e5e6e8;border:1px solid #b7bec8;border-radius:4px;box-sizing:border-box"></div>
<svg style="position:absolute;left:1245px;top:235px;" width="20" height="20" viewBox="0 0 20 20"><path d="M10 3A7 7 0 1 1 5.05 14.95" stroke="#1a1a1a" stroke-width="2" fill="none"/><path d="M5.05 14.95A7 7 0 0 1 8 3.3" stroke="#1a1a1a" stroke-width="2" fill="none" stroke-dasharray="2.6 2.2"/><path d="M7 3.2L11.5 -0.3L11.5 6.5Z" fill="#1a1a1a"/></svg>
<div style="position:absolute;left:206px;top:268px;width:97px;height:28px;background:#e5e6e8;border:1px solid #b7bec8;border-radius:4px;box-sizing:border-box"></div>
<div style="position:absolute;left:245px;top:269px;width:1px;height:26px;background:#b7bec8"></div>
<div style="position:absolute;left:284px;top:269px;width:1px;height:26px;background:#b7bec8"></div>
<svg style="position:absolute;left:215px;top:273px;" width="21" height="17" viewBox="0 0 21 17"><path d="M0 2a2 2 0 0 1 2-2h6l2 2.5h9a2 2 0 0 1 2 2V15a2 2 0 0 1-2 2H2a2 2 0 0 1-2-2z" fill="#1a1a1a"/></svg>
<svg style="position:absolute;left:256px;top:272px;" width="18" height="18" viewBox="0 0 18 18"><path d="M0 2a2 2 0 0 1 2-2h11l5 5v11a2 2 0 0 1-2 2H2a2 2 0 0 1-2-2z" fill="#1a1a1a"/><rect x="3" y="2" width="10" height="4" fill="#e5e6e8"/><circle cx="9" cy="12" r="2.6" fill="#e5e6e8"/></svg>
<svg style="position:absolute;left:288px;top:278px;" width="12" height="8" viewBox="0 0 12 8"><path d="M1 1L6.0 7L11 1" stroke="#1a1a1a" stroke-width="2" fill="none"/></svg>
<div style="position:absolute;left:308px;top:268px;width:60px;height:28px;background:#e5e6e8;border:1px solid #b7bec8;border-radius:4px;box-sizing:border-box"></div>
<svg style="position:absolute;left:318px;top:273px;" width="19" height="19" viewBox="0 0 19 19"><path d="M1 18l1-5L13 2l4 4L6 17z" fill="#1a1a1a"/><path d="M14 1l1.5-1 3.5 3.5-1 1.5z" fill="#1a1a1a"/></svg>
<svg style="position:absolute;left:341px;top:278px;" width="12" height="8" viewBox="0 0 12 8"><path d="M1 1L6.0 7L11 1" stroke="#1a1a1a" stroke-width="2" fill="none"/></svg>
<div style="position:absolute;left:372px;top:268px;width:59px;height:28px;background:#e5e6e8;border:1px solid #b7bec8;border-radius:4px;box-sizing:border-box"></div>
<div style="position:absolute;left:411px;top:269px;width:1px;height:26px;background:#b7bec8"></div>
<svg style="position:absolute;left:384px;top:273px;" width="18" height="18" viewBox="0 0 18 18"><path d="M0 0h18l-7 8v10l-4-3V8z" fill="#6e6e6e"/></svg>
<svg style="position:absolute;left:415px;top:278px;" width="12" height="8" viewBox="0 0 12 8"><path d="M1 1L6.0 7L11 1" stroke="#777" stroke-width="2" fill="none"/></svg>
<div style="position:absolute;left:435px;top:264px;width:152px;height:36px;background:#dcdee2;border:1px solid #cbd0d6;border-radius:4px;box-sizing:border-box"></div>
<div class="t" style="left:447px;top:275.64px;font-size:20.3px;color:#5c6778;letter-spacing:0px;font-weight:normal;">No limit</div>
<svg style="position:absolute;left:558px;top:279px;" width="12" height="7" viewBox="0 0 12 7"><path d="M0 0h12l-6 7z" fill="#5c6778"/></svg>
<div style="position:absolute;left:591px;top:268px;width:137px;height:28px;background:#e5e6e8;border:1px solid #b7bec8;border-radius:4px;box-sizing:border-box"></div>
<div style="position:absolute;left:630px;top:269px;width:1px;height:26px;background:#b7bec8"></div>
<div style="position:absolute;left:669px;top:269px;width:1px;height:26px;background:#b7bec8"></div>
<div style="position:absolute;left:708px;top:269px;width:1px;height:26px;background:#b7bec8"></div>
<svg style="position:absolute;left:603px;top:274px;" width="15" height="15" viewBox="0 0 15 15"><rect width="15" height="15" rx="2.5" fill="#6a6a6a"/></svg>
<svg style="position:absolute;left:644px;top:273.5px;" width="14" height="17" viewBox="0 0 14 17"><path d="M1 1.5Q1 0 2.3 0.8L13 7.3Q14 8 13 8.7L2.3 15.2Q1 16 1 14.5z" fill="#1a1a1a"/></svg>
<svg style="position:absolute;left:680px;top:272.5px;" width="14" height="16" viewBox="0 0 14 16"><path d="M0.5 0.5L12.5 7L0.5 13.5z" fill="#1a1a1a"/><path d="M4.2 9.2l1.8-1.2v6.5" stroke="#e6e6e6" stroke-width="1.3" fill="none"/></svg>
<svg style="position:absolute;left:712px;top:278px;" width="12" height="8" viewBox="0 0 12 8"><path d="M1 1L6.0 7L11 1" stroke="#1a1a1a" stroke-width="2" fill="none"/></svg>
<div style="position:absolute;left:732px;top:268px;width:97px;height:28px;background:#e5e6e8;border:1px solid #b7bec8;border-radius:4px;box-sizing:border-box"></div>
<div style="position:absolute;left:771px;top:269px;width:1px;height:26px;background:#b7bec8"></div>
<div style="position:absolute;left:810px;top:269px;width:1px;height:26px;background:#b7bec8"></div>
<svg style="position:absolute;left:743px;top:273px;" width="18" height="18" viewBox="0 0 18 18"><rect width="18" height="18" rx="2.5" fill="#1a1a1a"/><path d="M6 4.5h6.5M6 9h6M6 13.5h6.5M6 4v10" stroke="#eee" stroke-width="2.2"/></svg>
<svg style="position:absolute;left:782px;top:273px;" width="18" height="18" viewBox="0 0 18 18"><rect width="18" height="18" rx="2.5" fill="#1a1a1a"/><path d="M5.5 5v9M9.5 8v6M13 11v3" stroke="#eee" stroke-width="2.2"/></svg>
<svg style="position:absolute;left:814px;top:278px;" width="12" height="8" viewBox="0 0 12 8"><path d="M1 1L6.0 7L11 1" stroke="#1a1a1a" stroke-width="2" fill="none"/></svg>
<div style="position:absolute;left:834px;top:268px;width:78px;height:28px;background:#e5e6e8;border:1px solid #b7bec8;border-radius:4px;box-sizing:border-box"></div>
<div style="position:absolute;left:873px;top:269px;width:1px;height:26px;background:#b7bec8"></div>
<svg style="position:absolute;left:843px;top:272px;" width="20" height="20" viewBox="0 0 20 20"><ellipse cx="8" cy="3" rx="7.5" ry="2.8" fill="#6e6e6e"/><path d="M0.5 5v2.5c0 1.5 3.3 2.8 7.5 2.8s7.5-1.3 7.5-2.8V5c0 1.5-3.3 2.8-7.5 2.8S0.5 6.5 0.5 5zM0.5 9.8v2.5c0 1.5 3.3 2.8 7.5 2.8V12.5c-4.2 0-7.5-1.2-7.5-2.7z" fill="#6e6e6e"/><circle cx="14" cy="13.5" r="5.5" fill="#6e6e6e" stroke="#e5e6e8" stroke-width="1.2"/><path d="M11.3 13.6l2 2 3.6-3.8" stroke="#eee" stroke-width="1.5" fill="none"/></svg>
<svg style="position:absolute;left:882px;top:272px;" width="20" height="20" viewBox="0 0 20 20"><ellipse cx="8" cy="3" rx="7.5" ry="2.8" fill="#6e6e6e"/><path d="M0.5 5v2.5c0 1.5 3.3 2.8 7.5 2.8s7.5-1.3 7.5-2.8V5c0 1.5-3.3 2.8-7.5 2.8S0.5 6.5 0.5 5zM0.5 9.8v2.5c0 1.5 3.3 2.8 7.5 2.8V12.5c-4.2 0-7.5-1.2-7.5-2.7z" fill="#6e6e6e"/><circle cx="14" cy="13.5" r="5.5" fill="#6e6e6e" stroke="#e5e6e8" stroke-width="1.2"/><path d="M16.5 16a3 3 0 0 0-3-4.5h-2.5M12.5 9.8l-2 1.7 2 1.7" stroke="#eee" stroke-width="1.4" fill="none"/></svg>
<div style="position:absolute;left:917px;top:268px;width:59px;height:28px;background:#e5e6e8;border:1px solid #b7bec8;border-radius:4px;box-sizing:border-box"></div>
<svg style="position:absolute;left:926px;top:273px;" width="20" height="18" viewBox="0 0 20 18"><path d="M7 2h13M7 9h13M7 16h13" stroke="#1a1a1a" stroke-width="2.2"/><text x="0" y="5" font-family="Liberation Sans" font-size="6" fill="#1a1a1a">1</text><text x="0" y="11.5" font-family="Liberation Sans" font-size="6" fill="#1a1a1a">2</text><text x="0" y="18" font-family="Liberation Sans" font-size="6" fill="#1a1a1a">3</text></svg>
<svg style="position:absolute;left:950px;top:278px;" width="12" height="8" viewBox="0 0 12 8"><path d="M1 1L6.0 7L11 1" stroke="#1a1a1a" stroke-width="2" fill="none"/></svg>
<div style="position:absolute;left:981px;top:268px;width:39px;height:28px;background:#e5e6e8;border:1px solid #b7bec8;border-radius:4px;box-sizing:border-box"></div>
<svg style="position:absolute;left:991px;top:272px;" width="20" height="20" viewBox="0 0 20 20"><circle cx="10" cy="10" r="10" fill="#1a1a1a"/><text x="10" y="16" font-family="Liberation Sans" font-weight="bold" font-size="15" fill="#eee" text-anchor="middle">?</text></svg>
<div style="position:absolute;left:202px;top:304px;width:1078px;height:156px;background:#e8e8e8"></div>
<div class="t" style="left:210.5px;top:314.89px;font-size:20.3px;color:#2e6a9c;letter-spacing:0px;font-weight:normal;">Query</div>
<div class="t" style="left:287px;top:314.89px;font-size:20.3px;color:#222222;letter-spacing:0px;font-weight:normal;">Query History</div>
<div style="position:absolute;left:202px;top:332px;width:77px;height:2px;background:#2e5e88"></div>
<div style="position:absolute;left:202px;top:334px;width:1077px;height:1px;background:#cdd2d8"></div>
<svg style="position:absolute;left:1048px;top:311px;" width="17" height="17" viewBox="0 0 17 17"><path d="M2 15L15 2" stroke="#1a1a1a" stroke-width="1.8"/><path d="M9 1h7v7zM1 9v7h7z" fill="#1a1a1a"/></svg>
<div style="position:absolute;left:1078px;top:304px;width:1px;height:156px;background:#c6cbd1"></div>
<div style="position:absolute;left:202px;top:335px;width:38px;height:125px;background:#dcdee1"></div>
<div class="t" style="left:208px;top:345.14px;font-size:20.3px;color:#7d8694;letter-spacing:0px;font-weight:normal;">1</div>
<div class="t" style="left:208px;top:373.14px;font-size:20.3px;color:#7d8694;letter-spacing:0px;font-weight:normal;">2</div>
<div class="t" style="left:208px;top:401.14px;font-size:20.3px;color:#7d8694;letter-spacing:0px;font-weight:normal;">3</div>
<div class="t" style="left:208px;top:429.14px;font-size:20.3px;color:#7d8694;letter-spacing:0px;font-weight:normal;">4</div>
<svg style="position:absolute;left:226px;top:350px;" width="9" height="6" viewBox="0 0 9 6"><path d="M1 1l3.5 3.5L8 1" stroke="#111" stroke-width="1.6" fill="none"/></svg>
<div class="t" style="left:247px;top:345.04px;font-size:20.3px;color:#a31616;width:831px;overflow:hidden"><span style="color:#8c0b8c;font-weight:bold">SELECT</span> "DEPARTMENT_ID"<span style="color:#6a6a6a">,</span> "DEPARTMENT_NAME"<span style="color:#6a6a6a">,</span> "MANAGER_ID"<span style="color:#6a6a6a">,</span> "LOCATION_ID"</div>
<div class="t" style="left:247px;top:373.04px;font-size:20.3px;color:#a31616;width:831px;overflow:hidden"><span style="color:#8c0b8c;font-weight:bold">FROM</span> "EmployeesDepartments"<span style="color:#6a6a6a">.</span>"DEPARTMENTS"</div>
<div class="t" style="left:247px;top:401.04px;font-size:20.3px;color:#a31616;width:831px;overflow:hidden"><span style="color:#8c0b8c;font-weight:bold">ORDER BY</span> "DEPARTMENT_ID"<span style="color:#222222">;</span></div>
<div class="t" style="left:1088px;top:314.89px;font-size:20.3px;color:#2e6a9c;letter-spacing:0px;font-weight:normal;width:119px;overflow:hidden;-webkit-mask-image:linear-gradient(90deg,#000 0,#000 100px,rgba(0,0,0,.5) 119px)">Scratch Pa</div>
<div style="position:absolute;left:1079px;top:332px;width:128px;height:2px;background:#2e5e88"></div>
<svg style="position:absolute;left:1220px;top:318px;" width="12" height="8" viewBox="0 0 12 8"><path d="M1 1L6.0 7L11 1" stroke="#1a1a1a" stroke-width="2" fill="none"/></svg>
<svg style="position:absolute;left:1248.5px;top:311px;" width="17" height="17" viewBox="0 0 17 17"><path d="M2 15L15 2" stroke="#1a1a1a" stroke-width="1.8"/><path d="M9 1h7v7zM1 9v7h7z" fill="#1a1a1a"/></svg>
<div style="position:absolute;left:202px;top:460px;width:1078px;height:1px;background:#c6cbd1"></div>
<div style="position:absolute;left:202px;top:461px;width:1078px;height:30px;background:#e8e8e8"></div>
<div class="t" style="left:211px;top:471.54px;font-size:20.3px;color:#2e6a9c;letter-spacing:0px;font-weight:normal;">Data Output</div>
<div class="t" style="left:360px;top:471.54px;font-size:20.3px;color:#222222;letter-spacing:0px;font-weight:normal;">Messages</div>
<div class="t" style="left:474px;top:471.54px;font-size:20.3px;color:#222222;letter-spacing:0px;font-weight:normal;">Notifications</div>
<div style="position:absolute;left:202px;top:489px;width:150px;height:2px;background:#2e5e88"></div>
<svg style="position:absolute;left:1249px;top:467.5px;" width="17" height="17" viewBox="0 0 17 17"><path d="M2 15L15 2" stroke="#1a1a1a" stroke-width="1.8"/><path d="M9 1h7v7zM1 9v7h7z" fill="#1a1a1a"/></svg>
<div style="position:absolute;left:202px;top:491px;width:1078px;height:66px;background:#d5d8dc"></div>
<div style="position:absolute;left:204px;top:494px;width:194px;height:28px;background:#e5e6e8;border:1px solid #b7bec8;border-radius:4px;box-sizing:border-box"></div>
<div style="position:absolute;left:243px;top:495px;width:1px;height:26px;background:#b7bec8"></div>
<div style="position:absolute;left:282px;top:495px;width:1px;height:26px;background:#b7bec8"></div>
<div style="position:absolute;left:301px;top:495px;width:1px;height:26px;background:#b7bec8"></div>
<div style="position:absolute;left:340px;top:495px;width:1px;height:26px;background:#b7bec8"></div>
<div style="position:absolute;left:359px;top:495px;width:1px;height:26px;background:#b7bec8"></div>
<svg style="position:absolute;left:211px;top:500px;" width="26" height="18" viewBox="0 0 26 18"><path d="M0 2h15M0 7.5h15M0 13h10M19.5 6.5v11M14 12h11" stroke="#1a1a1a" stroke-width="2.4"/></svg>
<svg style="position:absolute;left:253px;top:497px;" width="20" height="22" viewBox="0 0 20 22"><path d="M1 15V1.2h11.5" stroke="#6e6e6e" stroke-width="2" fill="none"/><path d="M4.5 5.5a1.5 1.5 0 0 1 1.5-1.5h7.5l6 6v10a2 2 0 0 1-2 2H6.5a2 2 0 0 1-2-2z" fill="#6e6e6e"/><path d="M13.5 4v6h6" fill="#e6e6e6"/></svg>
<svg style="position:absolute;left:286px;top:505px;" width="12" height="8" viewBox="0 0 12 8"><path d="M1 1L6.0 7L11 1" stroke="#1a1a1a" stroke-width="2" fill="none"/></svg>
<svg style="position:absolute;left:312px;top:496.5px;" width="19" height="22" viewBox="0 0 19 22"><rect x="1" y="3.5" width="16" height="17.5" rx="1.5" stroke="#1a1a1a" stroke-width="2" fill="none"/><path d="M5 4.5V2.8h2.8a1.5 1.5 0 0 1 2.4 0H13v1.7z" fill="#1a1a1a" stroke="#1a1a1a" stroke-width="1.5"/></svg>
<svg style="position:absolute;left:344px;top:505px;" width="12" height="8" viewBox="0 0 12 8"><path d="M1 1L6.0 7L11 1" stroke="#1a1a1a" stroke-width="2" fill="none"/></svg>
<svg style="position:absolute;left:372px;top:498px;" width="15" height="20" viewBox="0 0 15 20"><rect x="0" y="1.5" width="15" height="2" fill="#6e6e6e"/><rect x="5" y="0" width="5" height="2" fill="#6e6e6e"/><path d="M1.5 5h12v11.5a2.5 2.5 0 0 1-2.5 2.5H4a2.5 2.5 0 0 1-2.5-2.5z" fill="#6e6e6e"/></svg>
<div style="position:absolute;left:404px;top:494px;width:38px;height:28px;background:#e5e6e8;border:1px solid #b7bec8;border-radius:4px;box-sizing:border-box"></div>
<svg style="position:absolute;left:413px;top:498px;" width="20" height="20" viewBox="0 0 20 20"><ellipse cx="8" cy="3" rx="7.5" ry="2.8" fill="#6e6e6e"/><path d="M0.5 5v2.5c0 1.5 3.3 2.8 7.5 2.8s7.5-1.3 7.5-2.8V5c0 1.5-3.3 2.8-7.5 2.8S0.5 6.5 0.5 5zM0.5 9.8v2.5c0 1.5 3.3 2.8 7.5 2.8V12.5c-4.2 0-7.5-1.2-7.5-2.7z" fill="#6e6e6e"/><circle cx="14" cy="13.5" r="5.5" fill="#6e6e6e" stroke="#e5e6e8" stroke-width="1.2"/><rect x="11" y="10.5" width="6" height="6" fill="#eee"/><rect x="12.5" y="13" width="3" height="2" fill="#6e6e6e"/></svg>
<div style="position:absolute;left:447px;top:494px;width:39px;height:28px;background:#e5e6e8;border:1px solid #b7bec8;border-radius:4px;box-sizing:border-box"></div>
<svg style="position:absolute;left:460px;top:498px;" width="15" height="19" viewBox="0 0 15 19"><rect x="5.3" y="0.5" width="4.4" height="7" fill="#1a1a1a"/><path d="M0.8 6.5h13.4L7.5 13.5z" fill="#1a1a1a"/><rect x="0.5" y="16" width="14" height="2" fill="#1a1a1a"/></svg>
<div style="position:absolute;left:491px;top:494px;width:39px;height:28px;background:#e5e6e8;border:1px solid #b7bec8;border-radius:4px;box-sizing:border-box"></div>
<svg style="position:absolute;left:500px;top:502px;" width="22" height="13" viewBox="0 0 22 13"><path d="M2 11l6.5-7 5 4.5 7-6.5" stroke="#1a1a1a" stroke-width="2" fill="none"/><circle cx="2" cy="11" r="2" fill="#1a1a1a"/><circle cx="8.5" cy="4" r="2" fill="#1a1a1a"/><circle cx="13.5" cy="8.5" r="2" fill="#1a1a1a"/><circle cx="20.5" cy="2" r="2" fill="#1a1a1a"/></svg>
<div style="position:absolute;left:535px;top:494px;width:39px;height:28px;background:#e5e6e8;border:1px solid #b7bec8;border-radius:4px;box-sizing:border-box"></div>
<div class="t" style="left:541px;top:502.24px;font-size:16px;color:#1a1a1a;letter-spacing:-0.6px;font-weight:normal;transform:scaleY(1.2);transform-origin:0 80%;-webkit-text-stroke:0.3px #1a1a1a">SQL</div>
<div class="t" style="left:204.75px;top:531.74px;font-size:20.3px;color:#222222;letter-spacing:0px;font-weight:normal;">Showing rows: 1 to 9</div>
<div style="position:absolute;left:452px;top:528px;width:34px;height:23px;background:#e5e6e8;border:1px solid #b7bec8;border-radius:4px;box-sizing:border-box"></div>
<svg style="position:absolute;left:460px;top:531px;" width="17" height="17" viewBox="0 0 17 17"><path d="M1 16l1-4.5L11.5 2l3.5 3.5L5.5 15z" fill="#1a1a1a"/><path d="M12.5 1l1.5-1 3 3-1 1.5z" fill="#1a1a1a"/></svg>
<div style="position:absolute;left:502.5px;top:528px;width:1px;height:23px;background:#c2c7cd"></div>
<div class="t" style="left:508px;top:531.74px;font-size:20.3px;color:#222222;letter-spacing:0px;font-weight:normal;">Page No:</div>
<div style="position:absolute;left:608.75px;top:526.5px;width:118px;height:26.5px;background:#e6e6e7;border:1px solid #cdd1d6;border-radius:4px;box-sizing:border-box"></div>
<div class="t" style="left:621px;top:531.74px;font-size:20.3px;color:#222222;letter-spacing:0px;font-weight:normal;">1</div>
<div class="t" style="left:733px;top:531.74px;font-size:20.3px;color:#222222;letter-spacing:0px;font-weight:normal;">of 1</div>
<div style="position:absolute;left:797.5px;top:528px;width:1px;height:23px;background:#c2c7cd"></div>
<div style="position:absolute;left:802px;top:526px;width:156px;height:27px;background:#e5e6e8;border:1px solid #b7bec8;border-radius:4px;box-sizing:border-box"></div>
<div style="position:absolute;left:841px;top:527px;width:1px;height:25px;background:#b7bec8"></div>
<div style="position:absolute;left:880px;top:527px;width:1px;height:25px;background:#b7bec8"></div>
<div style="position:absolute;left:919px;top:527px;width:1px;height:25px;background:#b7bec8"></div>
<svg style="position:absolute;left:815px;top:533px;" width="13" height="13" viewBox="0 0 13 13"><rect x="0" y="0" width="2.2" height="13" fill="#555"/><path d="M13 0v13L3.5 6.5z" fill="#555"/></svg>
<svg style="position:absolute;left:851px;top:534px;" width="19" height="11" viewBox="0 0 19 11"><path d="M9 0v11L0 5.5zM18 0v11L9 5.5z" fill="#555"/></svg>
<svg style="position:absolute;left:890px;top:534px;" width="19" height="11" viewBox="0 0 19 11"><path d="M0 0v11l9-5.5zM9 0v11l9-5.5z" fill="#555"/></svg>
<svg style="position:absolute;left:932px;top:533px;" width="13" height="13" viewBox="0 0 13 13"><path d="M0 0v13l9.5-6.5z" fill="#555"/><rect x="10.8" y="0" width="2.2" height="13" fill="#555"/></svg>
<div style="position:absolute;left:202px;top:557px;width:850px;height:39px;background:#a9b0bb"></div>
<div style="position:absolute;left:247px;top:596px;width:805.5px;height:25px;background:#d6d9dd"></div>
<div style="position:absolute;left:202px;top:596px;width:44px;height:25px;background:#a9b0bb"></div>
<div class="t" style="left:210.5px;top:600.44px;font-size:20.3px;color:#222222;letter-spacing:0px;font-weight:normal;">1</div>
<div style="position:absolute;left:247px;top:621px;width:805.5px;height:25px;background:#e7e7e7"></div>
<div style="position:absolute;left:202px;top:621px;width:44px;height:25px;background:#a9b0bb"></div>
<div class="t" style="left:210.5px;top:625.44px;font-size:20.3px;color:#222222;letter-spacing:0px;font-weight:normal;">2</div>
<div style="position:absolute;left:247px;top:646px;width:805.5px;height:25px;background:#d6d9dd"></div>
<div style="position:absolute;left:202px;top:646px;width:44px;height:25px;background:#a9b0bb"></div>
<div class="t" style="left:210.5px;top:650.44px;font-size:20.3px;color:#222222;letter-spacing:0px;font-weight:normal;">3</div>
<div style="position:absolute;left:247px;top:671px;width:805.5px;height:14px;background:#e7e7e7"></div>
<div style="position:absolute;left:202px;top:671px;width:44px;height:14px;background:#a9b0bb"></div>
<div class="t" style="left:210.5px;top:675.44px;font-size:20.3px;color:#222222;letter-spacing:0px;font-weight:normal;">4</div>
<div style="position:absolute;left:202px;top:621px;width:850px;height:1px;background:#c5c9cf"></div>
<div style="position:absolute;left:202px;top:646px;width:850px;height:1px;background:#c5c9cf"></div>
<div style="position:absolute;left:202px;top:671px;width:850px;height:1px;background:#c5c9cf"></div>
<div style="position:absolute;left:246px;top:557px;width:1px;height:128px;background:#c5c9cf"></div>
<div style="position:absolute;left:435px;top:557px;width:1px;height:128px;background:#c5c9cf"></div>
<div style="position:absolute;left:734px;top:557px;width:1px;height:128px;background:#c5c9cf"></div>
<div style="position:absolute;left:887px;top:557px;width:1px;height:128px;background:#c5c9cf"></div>
<div style="position:absolute;left:1052px;top:557px;width:1px;height:128px;background:#c5c9cf"></div>
<div class="t" style="left:253.5px;top:560.14px;font-size:20.3px;color:#222222;letter-spacing:0px;font-weight:bold;">DEPARTMENT_ID</div>
<div class="t" style="left:253.5px;top:575.54px;font-size:20.3px;color:#222222;letter-spacing:0px;font-weight:normal;">[PK] smallint</div>
<div class="t" style="left:443.5px;top:560.14px;font-size:20.3px;color:#222222;letter-spacing:0px;font-weight:bold;">DEPARTMENT_NAME</div>
<div class="t" style="left:443.5px;top:575.54px;font-size:20.3px;color:#222222;letter-spacing:0px;font-weight:normal;">character varying (30)</div>
<div class="t" style="left:741px;top:560.14px;font-size:20.3px;color:#222222;letter-spacing:0px;font-weight:bold;">MANAGER_ID</div>
<div class="t" style="left:741px;top:575.54px;font-size:20.3px;color:#222222;letter-spacing:0px;font-weight:normal;">integer</div>
<div class="t" style="left:895px;top:560.14px;font-size:20.3px;color:#222222;letter-spacing:0px;font-weight:bold;">LOCATION_ID</div>
<div class="t" style="left:895px;top:575.54px;font-size:20.3px;color:#222222;letter-spacing:0px;font-weight:normal;">smallint</div>
<svg style="position:absolute;left:416px;top:570px;" width="14" height="14" viewBox="0 0 14 14"><path d="M0.5 13.5l1-4L10 1l3 3-8.5 8.5z" fill="#1a1a1a"/></svg>
<svg style="position:absolute;left:717px;top:570px;" width="14" height="14" viewBox="0 0 14 14"><path d="M0.5 13.5l1-4L10 1l3 3-8.5 8.5z" fill="#1a1a1a"/></svg>
<svg style="position:absolute;left:869px;top:570px;" width="14" height="14" viewBox="0 0 14 14"><path d="M0.5 13.5l1-4L10 1l3 3-8.5 8.5z" fill="#1a1a1a"/></svg>
<svg style="position:absolute;left:1033px;top:570px;" width="14" height="14" viewBox="0 0 14 14"><path d="M0.5 13.5l1-4L10 1l3 3-8.5 8.5z" fill="#1a1a1a"/></svg>
<div style="position:absolute;left:246px;top:596px;width:850px;height:25px;overflow:hidden">
<div class="t" style="left:0;top:4.94px;font-size:20.3px;color:#222222;width:180.5px;text-align:right">10</div>
<div class="t" style="left:0;top:4.94px;font-size:20.3px;color:#222222;width:632.5px;text-align:right">200</div>
<div class="t" style="left:0;top:4.94px;font-size:20.3px;color:#222222;width:798px;text-align:right">1700</div>
<div class="t" style="left:199.5px;top:4.94px;font-size:20.3px;color:#222222">Administration</div>
</div>
<div style="position:absolute;left:246px;top:621px;width:850px;height:25px;overflow:hidden">
<div class="t" style="left:0;top:4.94px;font-size:20.3px;color:#222222;width:180.5px;text-align:right">20</div>
<div class="t" style="left:0;top:4.94px;font-size:20.3px;color:#222222;width:632.5px;text-align:right">201</div>
<div class="t" style="left:0;top:4.94px;font-size:20.3px;color:#222222;width:798px;text-align:right">1800</div>
<div class="t" style="left:199.5px;top:4.94px;font-size:20.3px;color:#222222">Marketing</div>
</div>
<div style="position:absolute;left:246px;top:646px;width:850px;height:25px;overflow:hidden">
<div class="t" style="left:0;top:4.94px;font-size:20.3px;color:#222222;width:180.5px;text-align:right">50</div>
<div class="t" style="left:0;top:4.94px;font-size:20.3px;color:#222222;width:632.5px;text-align:right">124</div>
<div class="t" style="left:0;top:4.94px;font-size:20.3px;color:#222222;width:798px;text-align:right">1500</div>
<div class="t" style="left:199.5px;top:4.94px;font-size:20.3px;color:#222222">Shipping</div>
</div>
<div style="position:absolute;left:246px;top:671px;width:850px;height:14px;overflow:hidden">
<div class="t" style="left:0;top:4.94px;font-size:20.3px;color:#222222;width:180.5px;text-align:right">60</div>
<div class="t" style="left:0;top:4.94px;font-size:20.3px;color:#222222;width:632.5px;text-align:right">103</div>
<div class="t" style="left:0;top:4.94px;font-size:20.3px;color:#222222;width:798px;text-align:right">1400</div>
<div class="t" style="left:199.5px;top:4.94px;font-size:20.3px;color:#222222">IT</div>
</div>
<div style="position:absolute;left:202px;top:685px;width:1078px;height:33px;background:#d5d8dc"></div>
<div style="position:absolute;left:202px;top:685px;width:1078px;height:1px;background:#c9cdd3"></div>
<div class="t" style="left:215px;top:693.14px;font-size:20.3px;color:#222222;letter-spacing:0px;font-weight:normal;">Total rows: 9</div>
<div style="position:absolute;left:384px;top:689px;width:1px;height:26px;background:#c2c7cd"></div>
<div style="position:absolute;left:738px;top:689px;width:1px;height:26px;background:#c2c7cd"></div>
<div class="t" style="left:398px;top:693.14px;font-size:20.3px;color:#222222;letter-spacing:0px;font-weight:normal;">Query complete 00:00:00.443</div>
<div class="t" style="left:1073px;top:693.14px;font-size:20.3px;color:#222222;letter-spacing:0px;font-weight:normal;">LF</div>
<div style="position:absolute;left:1108.5px;top:689px;width:1px;height:26px;background:#c2c7cd"></div>
<div class="t" style="left:1122.5px;top:693.14px;font-size:20.3px;color:#222222;letter-spacing:0px;font-weight:normal;">Ln 4, Col 1</div>
<div style="position:absolute;left:1279px;top:198px;width:1px;height:520px;background:#3a3a3a"></div>
<div style="position:absolute;left:0px;top:718px;width:1280px;height:2px;background:#1a1a1a"></div></body></html>
